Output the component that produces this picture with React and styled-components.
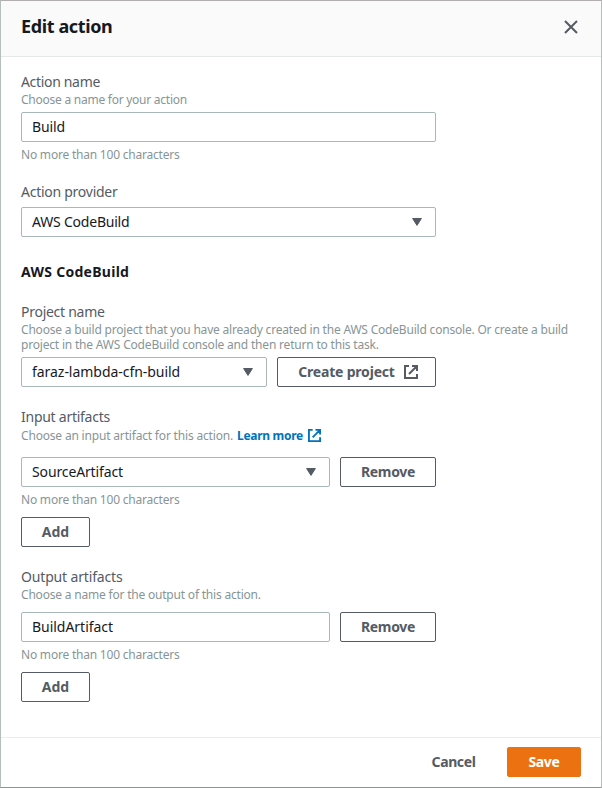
import React from 'react';
import styled, { createGlobalStyle } from 'styled-components';

const GlobalStyle = createGlobalStyle`
  * { box-sizing: border-box; }
  body {
    margin: 0;
    background: #fff;
    font-family: "Noto Sans", "Open Sans", sans-serif;
    font-size: 14px;
    line-height: 20px;
    color: #16191f;
  }
`;

const Modal = styled.div`
  display: flex;
  flex-direction: column;
  width: 602px;
  height: 788px;
  background: #fff;
  border: 1px solid #b5bdbd;
  border-top-color: #b0aeae;
  border-bottom-color: #879596;
`;

const Header = styled.header`
  display: flex;
  align-items: center;
  justify-content: space-between;
  height: 56px;
  padding: 0 23px 3px 20px;
  background: #fafafa;
  border-bottom: 1px solid #e6e8e8;
`;

const Title = styled.h2`
  margin: 0;
  padding-bottom: 2px;
  font-size: 18px;
  line-height: 24px;
  font-weight: 700;
  letter-spacing: -0.38px;
`;

const IconButton = styled.button`
  display: flex;
  padding: 0;
  border: 0;
  background: none;
  color: #545b64;
`;

const Body = styled.main`
  flex: 1;
  display: flex;
  flex-direction: column;
  gap: 20px;
  padding: 15px 20px 0;
`;

const Field = styled.section`
  display: flex;
  flex-direction: column;
  align-items: flex-start;
`;

const Text = styled.span`
  letter-spacing: ${(p) => p.$track || 0}px;
  white-space: nowrap;
`;

const Label = styled(Text)`
  color: #545b64;
`;

const Description = styled(Text)`
  font-size: 12px;
  line-height: ${(p) => p.$line || 15}px;
  color: #879596;
`;

const Hint = styled(Description)`
  margin-top: 5px;
`;

const SectionTitle = styled.h3`
  margin: 5px 0 0;
  font-size: 14px;
  line-height: 20px;
  font-weight: 700;
  letter-spacing: 0.28px;
`;

const ControlRow = styled.div`
  display: flex;
  gap: 10px;
  width: 415px;
  margin-top: ${(p) => p.$top || 5}px;
`;

const Control = styled.div`
  flex: 1;
  display: flex;
  align-items: center;
  justify-content: space-between;
  height: 30px;
  padding: 0 13px 0 10px;
  border: 1px solid #aab7b8;
  border-radius: 2px;
  background: #fff;
`;

const Button = styled.button`
  display: flex;
  align-items: center;
  justify-content: center;
  gap: 9px;
  width: ${(p) => p.$width}px;
  height: 30px;
  margin: ${(p) => p.$top || 0}px 0 0;
  padding: 0 0 0 ${(p) => p.$indent || 0}px;
  border: 1px solid ${(p) => (p.$kind === 'primary' ? '#ec7211' : p.$kind === 'link' ? 'transparent' : '#545b64')};
  border-radius: 2px;
  background: ${(p) => (p.$kind === 'primary' ? '#ec7211' : '#fff')};
  color: ${(p) => (p.$kind === 'primary' ? '#fff' : '#545b64')};
  font: 700 14px/20px "Noto Sans", "Open Sans", sans-serif;
`;

const Link = styled.a`
  display: inline-flex;
  align-items: center;
  gap: 5px;
  margin-left: 4px;
  font-weight: 700;
  letter-spacing: -0.3px;
  color: #0073bb;
`;

const HelpLine = styled.div`
  display: flex;
  align-items: center;
  height: 17px;
  font-size: 12px;
  line-height: 17px;
`;

const Footer = styled.footer`
  display: flex;
  align-items: center;
  justify-content: flex-end;
  gap: 9px;
  height: 50px;
  padding: 0 20px 2px 0;
  border-top: 1px solid #eaeded;
`;

const Caret = () => (
  <svg width="10" height="8" viewBox="0 0 10 8">
    <path d="M0.6 0.5H9.4L5 7.4Z" fill="#545b64" stroke="#545b64" strokeLinejoin="round" />
  </svg>
);

const CloseIcon = () => (
  <svg width="14" height="14" viewBox="0 0 14 14" fill="none" stroke="currentColor" strokeWidth="2">
    <path d="M1 1L13 13M13 1L1 13" />
  </svg>
);

const ExternalIcon = ({ size }) => (
  <svg width={size} height={size} viewBox="0 0 14 14" fill="none" stroke="currentColor" strokeWidth="2">
    <path d="M5 1H1V13H13V9M8 1H13V6M13 1L5 9" />
  </svg>
);

const Select = ({ value, track }) => (
  <Control>
    <Text $track={track}>{value}</Text>
    <Caret />
  </Control>
);

const Input = ({ value, track }) => (
  <Control>
    <Text $track={track}>{value}</Text>
  </Control>
);

const LengthHint = () => <Hint $track={-0.21}>No more than 100 characters</Hint>;

export default function App() {
  return (
    <>
      <GlobalStyle />
      <Modal role="dialog">
        <Header>
          <Title>Edit action</Title>
          <IconButton aria-label="Close"><CloseIcon /></IconButton>
        </Header>
        <Body>
          <Field>
            <Label $track={-0.33}>Action name</Label>
            <Description $track={-0.25}>Choose a name for your action</Description>
            <ControlRow><Input value="Build" track={-0.12} /></ControlRow>
            <LengthHint />
          </Field>
          <Field>
            <Label $track={-0.26}>Action provider</Label>
            <ControlRow><Select value="AWS CodeBuild" track={-0.21} /></ControlRow>
          </Field>
          <SectionTitle>AWS CodeBuild</SectionTitle>
          <Field>
            <Label $track={-0.27}>Project name</Label>
            <Description $track={-0.2}>Choose a build project that you have already created in the AWS CodeBuild console. Or create a build</Description>
            <Description $track={-0.19}>project in the AWS CodeBuild console and then return to this task.</Description>
            <ControlRow>
              <Select value="faraz-lambda-cfn-build" track={-0.04} />
              <Button $width={159} $indent={3}>
                <Text $track={-0.2}>Create project</Text>
                <ExternalIcon size={14} />
              </Button>
            </ControlRow>
          </Field>
          <Field>
            <Label $track={-0.26}>Input artifacts</Label>
            <HelpLine>
              <Description $track={-0.18} $line={17}>Choose an input artifact for this action.</Description>
              <Link>Learn more <ExternalIcon size={13} /></Link>
            </HelpLine>
            <ControlRow $top={13}>
              <Select value="SourceArtifact" track={-0.13} />
              <Button $width={96}><Text $track={-0.33}>Remove</Text></Button>
            </ControlRow>
            <LengthHint />
            <Button $width={69} $top={10}>Add</Button>
          </Field>
          <Field>
            <Label $track={-0.16}>Output artifacts</Label>
            <Description $track={-0.2}>Choose a name for the output of this action.</Description>
            <ControlRow $top={10}>
              <Input value="BuildArtifact" track={-0.03} />
              <Button $width={96}><Text $track={-0.33}>Remove</Text></Button>
            </ControlRow>
            <LengthHint />
            <Button $width={69} $top={10}>Add</Button>
          </Field>
        </Body>
        <Footer>
          <Button $kind="link" $width={89}><Text $track={-0.4}>Cancel</Text></Button>
          <Button $kind="primary" $width={74}><Text $track={-0.36}>Save</Text></Button>
        </Footer>
      </Modal>
    </>
  );
}
